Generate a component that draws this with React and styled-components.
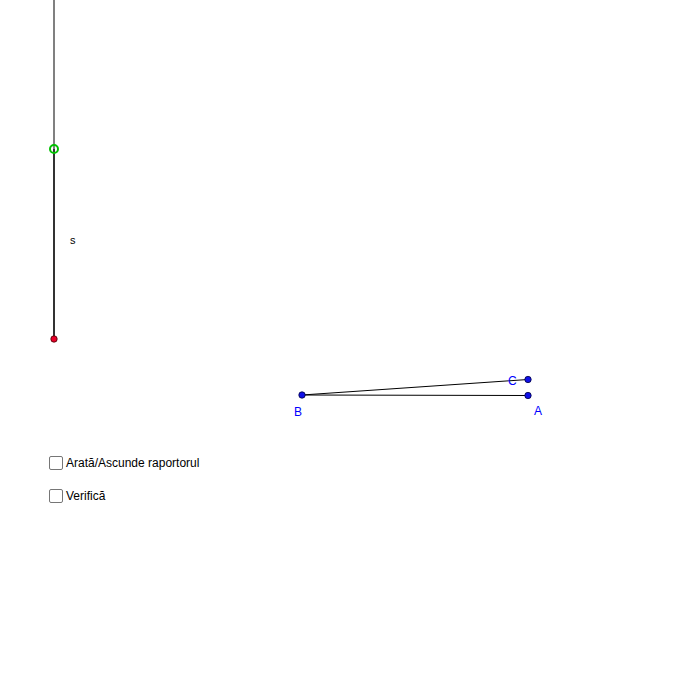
import React, { useState } from 'react';
import styled, { createGlobalStyle } from 'styled-components';

const GlobalStyle = createGlobalStyle`
  html, body {
    margin: 0;
    padding: 0;
    background: #ffffff;
    font-family: "Liberation Sans", Arial, sans-serif;
  }
`;

const Page = styled.div`
  width: 675px;
  height: 700px;
  background: #fff;
  overflow: hidden;
`;

const Canvas = styled.svg`
  display: block;
  width: 675px;
  height: 455px;
`;

const Label = styled.text`
  font-family: "Liberation Sans", Arial, sans-serif;
  font-size: ${(p) => (p.small ? 11 : 12)}px;
  fill: ${(p) => (p.point ? '#0000ff' : '#000')};
`;

const Controls = styled.div`
  display: flex;
  flex-direction: column;
  gap: 17px;
  padding-left: 49px;
`;

const CheckRow = styled.label`
  display: flex;
  align-items: center;
  gap: 3px;
  height: 16px;
  font-size: 12px;
  color: #000;
  cursor: pointer;
`;

const Box = styled.span`
  width: 12px;
  height: 12px;
  border: 1px solid #767676;
  border-radius: 2px;
  background: ${(p) => (p.checked ? '#0075ff' : '#fff')};
`;

const Check = ({ text }) => {
  const [on, setOn] = useState(false);
  return (
    <CheckRow onClick={() => setOn(!on)}>
      <Box checked={on} />
      {text}
    </CheckRow>
  );
};

const Dot = ({ x, y }) => (
  <circle cx={x} cy={y} r="3.2" fill="#1010e8" stroke="#000040" strokeWidth="0.8" />
);

const App = () => (
  <Page>
    <GlobalStyle />
    <Canvas viewBox="0 0 675 455">
      {/* slider s */}
      <line x1="54" y1="0" x2="54" y2="149" stroke="#808080" strokeWidth="2" />
      <line x1="54" y1="149" x2="54" y2="339" stroke="#333" strokeWidth="2" />
      <circle cx="54" cy="149" r="4" fill="none" stroke="#00c000" strokeWidth="2" />
      <circle cx="54" cy="339" r="3.2" fill="#e8002a" stroke="#400" strokeWidth="0.8" />
      <Label small x="70" y="244">s</Label>

      {/* angle */}
      <line x1="302" y1="395" x2="528" y2="395.5" stroke="#000" strokeWidth="1" />
      <line x1="302" y1="395" x2="528" y2="379.5" stroke="#000" strokeWidth="1" />
      <Dot x={302} y={395} />
      <Dot x={528} y={395.5} />
      <Dot x={528} y={379.5} />
      <Label point x="294" y="416">B</Label>
      <Label point x="534" y="415">A</Label>
      <Label point x="508" y="385">C</Label>
    </Canvas>
    <Controls>
      <Check text="Arată/Ascunde raportorul" />
      <Check text="Verifică" />
    </Controls>
  </Page>
);

export default App;
